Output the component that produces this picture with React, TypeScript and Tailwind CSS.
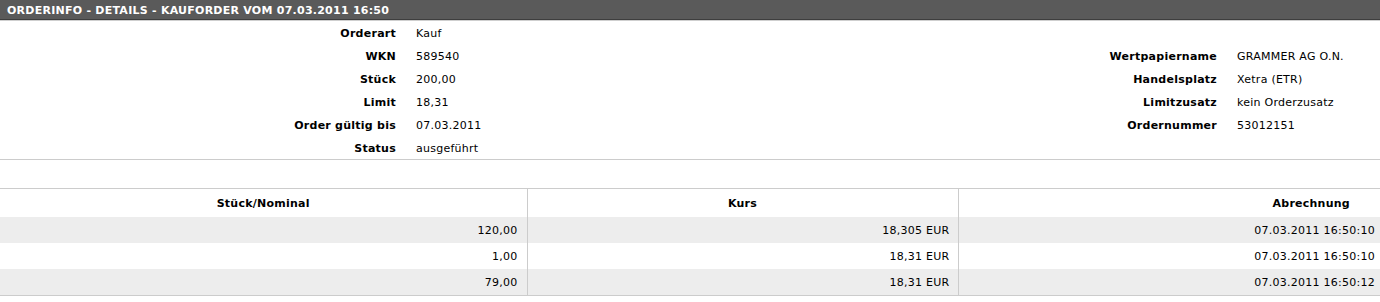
import React from 'react';

const leftRows: [string, string][] = [
  ['Orderart', 'Kauf'],
  ['WKN', '589540'],
  ['Stück', '200,00'],
  ['Limit', '18,31'],
  ['Order gültig bis', '07.03.2011'],
  ['Status', 'ausgeführt'],
];

const rightRows: ([string, string] | null)[] = [
  null,
  ['Wertpapiername', 'GRAMMER AG O.N.'],
  ['Handelsplatz', 'Xetra (ETR)'],
  ['Limitzusatz', 'kein Orderzusatz'],
  ['Ordernummer', '53012151'],
  null,
];

const fills = [
  { stueck: '120,00', kurs: '18,305 EUR', zeit: '07.03.2011 16:50:10' },
  { stueck: '1,00', kurs: '18,31 EUR', zeit: '07.03.2011 16:50:10' },
  { stueck: '79,00', kurs: '18,31 EUR', zeit: '07.03.2011 16:50:12' },
];

const App: React.FC = () => {
  return (
    <div className="w-[1380px] bg-white text-[11px] tracking-[0.25px] text-black font-['Verdana','DejaVu_Sans',sans-serif]">
      <div className="h-[20px] bg-[#5a5a5a] border-b border-[#3e3e3e] px-[7px] flex items-center pt-[2px]">
        <span className="text-white font-bold leading-none">
          ORDERINFO - DETAILS - KAUFORDER VOM 07.03.2011 16:50
        </span>
      </div>
      <div className="h-px bg-[#cfcfcf]" />

      <div className="grid grid-cols-[406px_600px_221px_1fr] border-b border-[#cccccc]">
        {leftRows.map(([label, value], i) => (
          <React.Fragment key={label}>
            <div className="h-[23px] flex items-center justify-end pr-[10px] pt-[3px] font-bold">{label}</div>
            <div className="h-[23px] flex items-center pl-[10px] pt-[3px]">{value}</div>
            <div className="h-[23px] flex items-center justify-end pr-[10px] pt-[3px] font-bold">
              {rightRows[i]?.[0]}
            </div>
            <div className="h-[23px] flex items-center pl-[10px] pt-[3px]">{rightRows[i]?.[1]}</div>
          </React.Fragment>
        ))}
      </div>

      <div className="h-[28px]" />

      <table className="w-[1380px] border-collapse table-fixed">
        <colgroup>
          <col className="w-[527px]" />
          <col className="w-[431px]" />
          <col className="w-[422px]" />
        </colgroup>
        <thead>
          <tr className="h-[28px] border-t border-[#cccccc]">
            <th className="font-bold text-center p-0 pt-[2px]">Stück/Nominal</th>
            <th className="font-bold text-center p-0 pt-[2px] border-l border-[#cccccc]">Kurs</th>
            <th className="font-bold text-right p-0 pt-[2px] pr-[30px] border-l border-[#cccccc]">Abrechnung</th>
          </tr>
        </thead>
        <tbody>
          {fills.map((f, i) => (
            <tr key={i} className={`h-[26px] ${i % 2 === 0 ? 'bg-[#ededed]' : 'bg-white'}`}>
              <td className="text-right p-0 pt-[3px] pr-[9px]">{f.stueck}</td>
              <td className="text-right p-0 pt-[3px] pr-[8px] border-l border-[#cccccc]">{f.kurs}</td>
              <td className="text-right p-0 pt-[3px] pr-[5px] border-l border-[#cccccc]">{f.zeit}</td>
            </tr>
          ))}
          <tr className="h-px">
            <td colSpan={3} className="p-0 h-px bg-[#cccccc]" />
          </tr>
        </tbody>
      </table>
    </div>
  );
};

export default App;
